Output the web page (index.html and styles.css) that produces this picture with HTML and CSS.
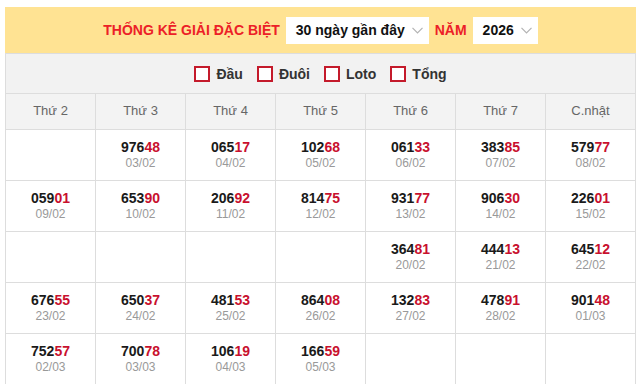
FILE: index.html
```html
<!DOCTYPE html>
<html lang="vi">
<head>
<meta charset="utf-8">
<title>Thống kê giải đặc biệt</title>
<link rel="stylesheet" href="styles.css">
</head>
<body>
<div class="wrap">
  <div class="top">
    <span class="title">THỐNG KÊ GIẢI ĐẶC BIỆT</span>
    <div class="select"><span>30 ngày gần đây</span><svg class="chev" width="11" height="7" viewBox="0 0 11 7"><polyline points="0.5,0.8 5.5,5.8 10.5,0.8" fill="none" stroke="#b3b3b3" stroke-width="1.2"/></svg></div>
    <span class="title">NĂM</span>
    <div class="select"><span>2026</span><svg class="chev" width="11" height="7" viewBox="0 0 11 7"><polyline points="0.5,0.8 5.5,5.8 10.5,0.8" fill="none" stroke="#b3b3b3" stroke-width="1.2"/></svg></div>
  </div>
  <div class="filters">
    <label class="chk"><span class="box"></span>Đầu</label>
    <label class="chk"><span class="box"></span>Đuôi</label>
    <label class="chk"><span class="box"></span>Loto</label>
    <label class="chk"><span class="box"></span>Tổng</label>
  </div>
  <div class="grid">
    <div class="cell head">Thứ 2</div>
    <div class="cell head">Thứ 3</div>
    <div class="cell head">Thứ 4</div>
    <div class="cell head">Thứ 5</div>
    <div class="cell head">Thứ 6</div>
    <div class="cell head">Thứ 7</div>
    <div class="cell head">C.nhật</div>

    <div class="cell"></div>
    <div class="cell"><div class="num">976<b>48</b></div><div class="date">03/02</div></div>
    <div class="cell"><div class="num">065<b>17</b></div><div class="date">04/02</div></div>
    <div class="cell"><div class="num">102<b>68</b></div><div class="date">05/02</div></div>
    <div class="cell"><div class="num">061<b>33</b></div><div class="date">06/02</div></div>
    <div class="cell"><div class="num">383<b>85</b></div><div class="date">07/02</div></div>
    <div class="cell"><div class="num">579<b>77</b></div><div class="date">08/02</div></div>

    <div class="cell"><div class="num">059<b>01</b></div><div class="date">09/02</div></div>
    <div class="cell"><div class="num">653<b>90</b></div><div class="date">10/02</div></div>
    <div class="cell"><div class="num">206<b>92</b></div><div class="date">11/02</div></div>
    <div class="cell"><div class="num">814<b>75</b></div><div class="date">12/02</div></div>
    <div class="cell"><div class="num">931<b>77</b></div><div class="date">13/02</div></div>
    <div class="cell"><div class="num">906<b>30</b></div><div class="date">14/02</div></div>
    <div class="cell"><div class="num">226<b>01</b></div><div class="date">15/02</div></div>

    <div class="cell"></div>
    <div class="cell"></div>
    <div class="cell"></div>
    <div class="cell"></div>
    <div class="cell"><div class="num">364<b>81</b></div><div class="date">20/02</div></div>
    <div class="cell"><div class="num">444<b>13</b></div><div class="date">21/02</div></div>
    <div class="cell"><div class="num">645<b>12</b></div><div class="date">22/02</div></div>

    <div class="cell"><div class="num">676<b>55</b></div><div class="date">23/02</div></div>
    <div class="cell"><div class="num">650<b>37</b></div><div class="date">24/02</div></div>
    <div class="cell"><div class="num">481<b>53</b></div><div class="date">25/02</div></div>
    <div class="cell"><div class="num">864<b>08</b></div><div class="date">26/02</div></div>
    <div class="cell"><div class="num">132<b>83</b></div><div class="date">27/02</div></div>
    <div class="cell"><div class="num">478<b>91</b></div><div class="date">28/02</div></div>
    <div class="cell"><div class="num">901<b>48</b></div><div class="date">01/03</div></div>

    <div class="cell"><div class="num">752<b>57</b></div><div class="date">02/03</div></div>
    <div class="cell"><div class="num">700<b>78</b></div><div class="date">03/03</div></div>
    <div class="cell"><div class="num">106<b>19</b></div><div class="date">04/03</div></div>
    <div class="cell"><div class="num">166<b>59</b></div><div class="date">05/03</div></div>
    <div class="cell"></div>
    <div class="cell"></div>
    <div class="cell"></div>
  </div>
</div>
</body>
</html>
```

FILE: styles.css
```css
* { box-sizing: border-box; }
html, body { margin: 0; padding: 0; background: #fff; }
body { font-family: "Liberation Sans", Arial, sans-serif; color: #222; }

.wrap { margin: 7px 0 0 5px; width: 631px; }

.top {
  height: 46px;
  background: #ffe393;
  display: flex;
  align-items: center;
  justify-content: center;
  gap: 6px;
}
.title { color: #ec2027; font-weight: bold; font-size: 14px; white-space: nowrap; }
.select {
  height: 27px;
  background: #fff;
  display: flex;
  align-items: center;
  padding: 0 6px 0 10px;
  font-weight: bold;
  font-size: 14px;
  color: #111;
  gap: 7px;
  white-space: nowrap;
  flex-shrink: 0;
}
.chev { display: block; margin-top: 1px; }

.filters {
  height: 40px;
  background: #f2f2f2;
  border: 1px solid #ddd;
  border-bottom: 0;
  display: flex;
  align-items: center;
  justify-content: center;
  gap: 14px;
  padding-top: 1px;
}
.chk {
  display: flex;
  align-items: center;
  gap: 6px;
  font-weight: bold;
  font-size: 14px;
  color: #333;
}
.box {
  width: 16px;
  height: 16px;
  border: 2px solid #c41a2b;
  background: #fff;
  display: block;
}

.grid {
  display: grid;
  grid-template-columns: repeat(7, 90px);
  border-top: 1px solid #ddd;
  border-left: 1px solid #ddd;
}
.cell {
  height: 51px;
  border-right: 1px solid #ddd;
  border-bottom: 1px solid #ddd;
  display: flex;
  flex-direction: column;
  align-items: center;
  justify-content: center;
  background: #fff;
  padding-bottom: 1px;
}
.cell.head {
  height: 36px;
  background: #f3f3f3;
  font-size: 13px;
  color: #666;
  padding-bottom: 2px;
}
.num { font-weight: bold; font-size: 14px; line-height: 17px; color: #1a1a1a; }
.num b { color: #c8102e; }
.date { font-size: 12px; line-height: 15px; color: #999; }
```
